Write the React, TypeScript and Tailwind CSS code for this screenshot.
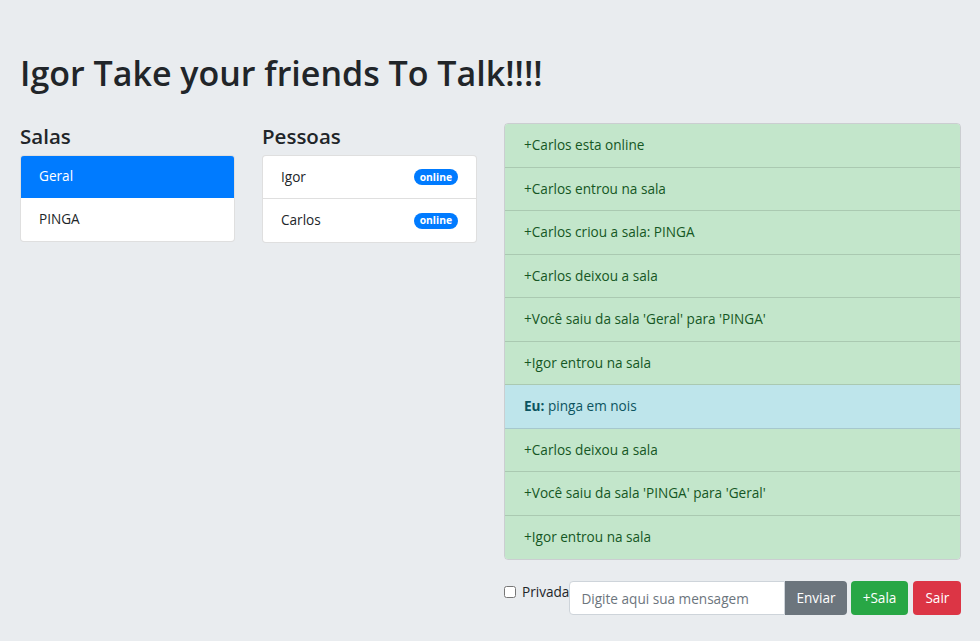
import React from "react";

const font = { fontFamily: '"Open Sans", "Noto Sans", sans-serif' };

const messages: { kind: "s" | "i"; text: string; bold?: string }[] = [
  { kind: "s", text: "+Carlos esta online" },
  { kind: "s", text: "+Carlos entrou na sala" },
  { kind: "s", text: "+Carlos criou a sala: PINGA" },
  { kind: "s", text: "+Carlos deixou a sala" },
  { kind: "s", text: "+Você saiu da sala 'Geral' para 'PINGA'" },
  { kind: "s", text: "+Igor entrou na sala" },
  { kind: "i", bold: "Eu:", text: " pinga em nois" },
  { kind: "s", text: "+Carlos deixou a sala" },
  { kind: "s", text: "+Você saiu da sala 'PINGA' para 'Geral'" },
  { kind: "s", text: "+Igor entrou na sala" },
];

export default function App() {
  return (
    <div
      className="w-[980px] h-[641px] bg-[#e9ecef] text-[#212529] pl-[20px] pr-[19px] overflow-hidden"
      style={font}
    >
      <h1 className="pt-[52px] text-[34px] leading-[43px] font-semibold text-[#212529]">
        Igor Take your friends To Talk!!!!
      </h1>
      <div className="mt-[28px] flex gap-[27px]">
        <div className="w-[215px] flex-none">
          <h4 className="text-[20.5px] leading-[26px] font-semibold mb-[6px]">Salas</h4>
          <div className="rounded-[4px] overflow-hidden border border-[rgba(0,0,0,0.125)] bg-white text-[13.6px]">
            <div className="bg-[#007bff] text-white h-[43px] flex items-center px-[18px] -m-px mb-0 border border-[#007bff] rounded-t-[4px] relative">
              Geral
            </div>
            <div className="h-[43px] flex items-center px-[18px]">PINGA</div>
          </div>
        </div>
        <div className="w-[215px] flex-none">
          <h4 className="text-[20.5px] leading-[26px] font-semibold mb-[6px]">Pessoas</h4>
          <div className="rounded-[4px] border border-[rgba(0,0,0,0.125)] bg-white text-[13.6px]">
            {["Igor", "Carlos"].map((n, i) => (
              <div
                key={n}
                className={`h-[43px] flex items-center justify-between pl-[18px] pr-[18px] ${
                  i === 0 ? "border-b border-[rgba(0,0,0,0.125)]" : ""
                }`}
              >
                <span>{n}</span>
                <span className="bg-[#007bff] text-white text-[10.3px] font-bold leading-none rounded-full h-[16px] px-[6px] flex items-center">
                  online
                </span>
              </div>
            ))}
          </div>
        </div>
        <div className="w-[457px] flex-none">
          <div className="rounded-[4px] border border-[rgba(0,0,0,0.125)] overflow-hidden text-[13.6px]">
            {messages.map((m, i) => (
              <div
                key={i}
                className={`h-[43.5px] flex items-center px-[19px] ${
                  i < messages.length - 1 ? "border-b border-[rgba(0,0,0,0.125)]" : ""
                } ${m.kind === "s" ? "bg-[#c3e6cb] text-[#155724]" : "bg-[#bee5eb] text-[#0c5460]"}`}
              >
                {m.bold ? (
                  <span>
                    <b className="font-bold">{m.bold}</b>
                    {m.text}
                  </span>
                ) : (
                  m.text
                )}
              </div>
            ))}
          </div>
          <div className="mt-[21px] flex items-start">
            <label className="flex items-center gap-[6px] mt-[1px] text-[13.6px] leading-[20px]">
              <input type="checkbox" className="w-[12px] h-[12px] m-0" />
              <span>Privada</span>
            </label>
            <div className="flex">
              <input
                placeholder="Digite aqui sua mensagem"
                className="w-[216px] h-[34px] bg-white border border-[#ced4da] rounded-l-[4px] px-[11px] text-[13.6px] placeholder:text-[#6c757d] outline-none"
                style={font}
              />
              <button className="h-[34px] px-[11px] bg-[#6c757d] text-white rounded-r-[4px] text-[13.6px]">
                Enviar
              </button>
            </div>
            <button className="ml-[4px] h-[34px] px-[12px] bg-[#28a745] text-white rounded-[4px] text-[13.6px]">
              +Sala
            </button>
            <button className="ml-[5px] h-[34px] px-[12px] bg-[#dc3545] text-white rounded-[4px] text-[13.6px]">
              Sair
            </button>
          </div>
        </div>
      </div>
    </div>
  );
}
